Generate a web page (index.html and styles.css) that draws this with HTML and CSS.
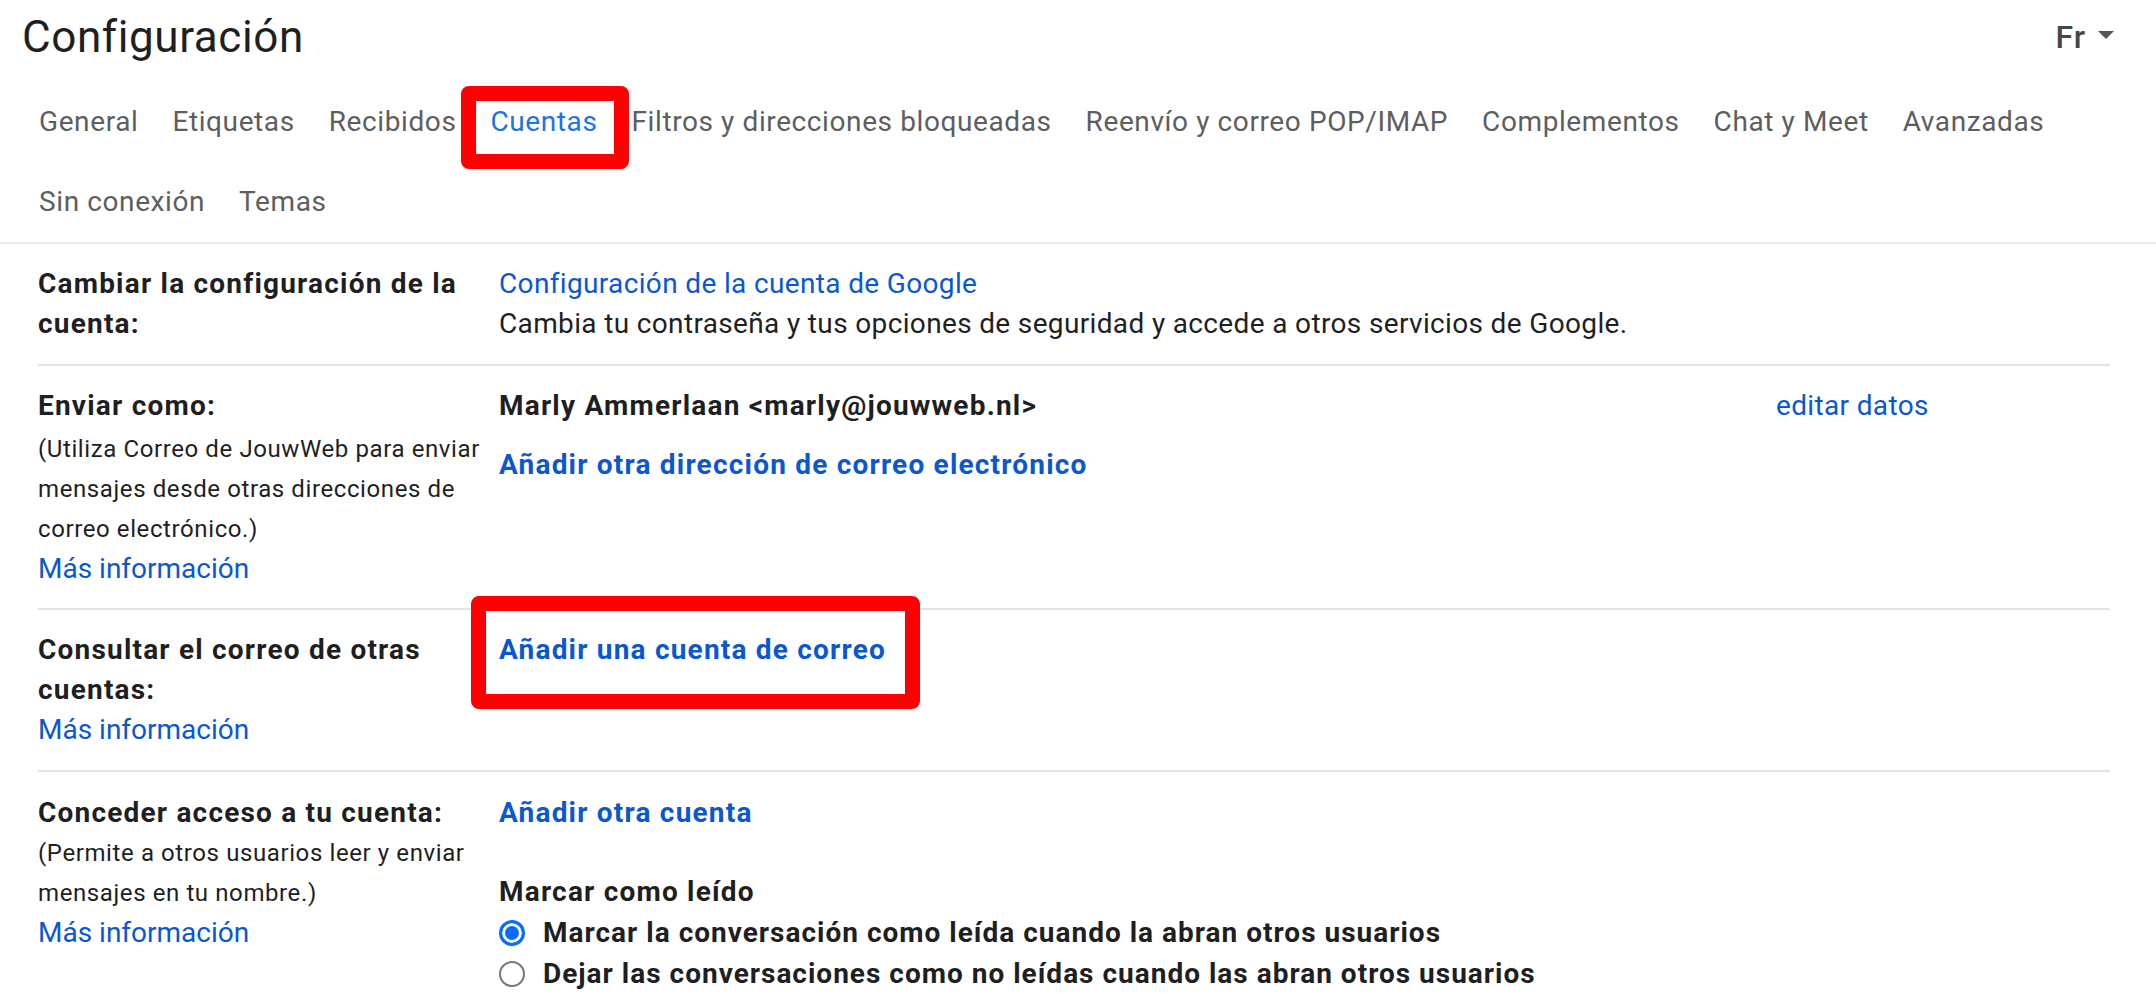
FILE: index.html
```html
<!DOCTYPE html>
<html lang="es">
<head>
    <meta charset="UTF-8">
    <meta name="viewport" content="width=device-width, initial-scale=1.0">
    <title>Configuración - Cuentas</title>
    <link rel="stylesheet" href="styles.css">
</head>
<body>
    <header class="top">
        <div class="title-bar">
            <h1 class="title">Configuración</h1>
            <div class="account">
                <span class="account-name">Fr</span>
                <span class="caret"></span>
            </div>
        </div>
        <nav class="tabs">
            <a href="#" class="tab">General</a>
            <a href="#" class="tab">Etiquetas</a>
            <a href="#" class="tab">Recibidos</a>
            <a href="#" class="tab active">Cuentas<span class="mark mark-tab"></span></a>
            <a href="#" class="tab">Filtros y direcciones bloqueadas</a>
            <a href="#" class="tab">Reenvío y correo POP/IMAP</a>
            <a href="#" class="tab">Complementos</a>
            <a href="#" class="tab">Chat y Meet</a>
            <a href="#" class="tab">Avanzadas</a>
            <a href="#" class="tab">Sin conexión</a>
            <a href="#" class="tab">Temas</a>
        </nav>
    </header>

    <main class="settings">
        <section class="row">
            <div class="label">
                <div class="label-title">Cambiar la configuración de la cuenta:</div>
            </div>
            <div class="value">
                <a href="#" class="link">Configuración de la cuenta de Google</a>
                <div class="text">Cambia tu contraseña y tus opciones de seguridad y accede a otros servicios de Google.</div>
            </div>
        </section>

        <section class="row row-send">
            <div class="label">
                <div class="label-title">Enviar como:</div>
                <div class="label-note">(Utiliza Correo de JouwWeb para enviar mensajes desde otras direcciones de correo electrónico.)</div>
                <a href="#" class="link">Más información</a>
            </div>
            <div class="value">
                <div class="send-as">
                    <div class="strong">Marly Ammerlaan &lt;marly@jouwweb.nl&gt;</div>
                    <a href="#" class="link">editar datos</a>
                </div>
                <a href="#" class="link strong add-address">Añadir otra dirección de correo electrónico</a>
            </div>
        </section>

        <section class="row">
            <div class="label">
                <div class="label-title">Consultar el correo de otras cuentas:</div>
                <a href="#" class="link">Más información</a>
            </div>
            <div class="value">
                <a href="#" class="link strong boxed">Añadir una cuenta de correo<span class="mark mark-link"></span></a>
            </div>
        </section>

        <section class="row row-last">
            <div class="label">
                <div class="label-title">Conceder acceso a tu cuenta:</div>
                <div class="label-note">(Permite a otros usuarios leer y enviar mensajes en tu nombre.)</div>
                <a href="#" class="link">Más información</a>
            </div>
            <div class="value">
                <a href="#" class="link strong">Añadir otra cuenta</a>
                <div class="strong read-title">Marcar como leído</div>
                <label class="option">
                    <span class="radio checked"></span>
                    <span class="strong">Marcar la conversación como leída cuando la abran otros usuarios</span>
                </label>
                <label class="option">
                    <span class="radio"></span>
                    <span class="strong">Dejar las conversaciones como no leídas cuando las abran otros usuarios</span>
                </label>
            </div>
        </section>
    </main>
</body>
</html>
```

FILE: styles.css
```css
* {
    margin: 0;
    padding: 0;
    box-sizing: border-box;
}

body {
    background: #ffffff;
    font-family: Roboto, 'Liberation Sans', sans-serif;
    font-size: 28px;
    line-height: 40px;
    color: #1f1f1f;
    overflow: hidden;
}

a {
    text-decoration: none;
}

/* header */

.top {
    border-bottom: 2px solid #e9edf2;
}

.title-bar {
    display: flex;
    justify-content: space-between;
    align-items: center;
    padding: 0 42px 0 22px;
}

.title {
    font-size: 44px;
    font-weight: 400;
    line-height: 74px;
    letter-spacing: 0.6px;
    color: #1f1f1f;
}

.account {
    display: flex;
    align-items: center;
    gap: 12px;
    color: #474747;
}

.account-name {
    font-size: 32px;
    font-weight: 500;
    line-height: 40px;
    letter-spacing: 1px;
}

.caret {
    width: 0;
    height: 0;
    border-left: 8px solid transparent;
    border-right: 8px solid transparent;
    border-top: 8px solid #555555;
    margin-top: -4px;
}

.tabs {
    display: flex;
    flex-wrap: wrap;
    margin-top: 8px;
    padding: 0 22px;
}

.tab {
    position: relative;
    padding: 0 17px;
    line-height: 80px;
    letter-spacing: 0.6px;
    color: #5e5e5e;
    white-space: nowrap;
}

.tab.active {
    color: #1a73e8;
}

/* red annotation frames */

.mark {
    position: absolute;
    border: 15px solid #ff0000;
    border-radius: 8px;
    pointer-events: none;
    z-index: 5;
}

.mark-tab {
    left: -12px;
    right: -15px;
    top: 4px;
    bottom: -7px;
}

.mark-link {
    left: -28px;
    right: -34px;
    top: -34px;
    bottom: -39px;
}

/* settings rows */

.settings {
    margin: 0 46px 0 38px;
}

.row {
    display: grid;
    grid-template-columns: 461px 1fr;
    padding: 20px 0;
    border-bottom: 2px solid #e3e3e3;
}

.row-send {
    padding-bottom: 19px;
}

.row-send .label-note {
    margin-top: 3px;
}

.row-last {
    border-bottom: none;
    padding-top: 21px;
}

.label {
    width: 452px;
}

.label-title,
.strong {
    font-weight: 700;
    letter-spacing: 1.2px;
}

.label-note {
    font-size: 24px;
    line-height: 40px;
    letter-spacing: 0.6px;
}

.label .link {
    display: block;
}

.value {
    display: flex;
    flex-direction: column;
    align-items: flex-start;
    letter-spacing: 0.35px;
}

.link {
    color: #0b57d0;
}

.text {
    color: #1f1f1f;
}

.send-as {
    display: grid;
    grid-template-columns: 1277px auto;
    width: 100%;
}

.add-address {
    margin-top: 19px;
}

.boxed {
    position: relative;
    display: inline-block;
}

.read-title {
    margin-top: 39px;
}

.option {
    display: flex;
    align-items: center;
    gap: 18px;
    margin-top: 1px;
    cursor: pointer;
}

.option .strong {
    letter-spacing: 1px;
}

.radio {
    width: 26px;
    height: 26px;
    border: 2px solid #767676;
    border-radius: 50%;
    background: #ffffff;
}

.radio.checked {
    border: 3px solid #0a6cff;
    background: #0a6cff;
    box-shadow: inset 0 0 0 3px #ffffff;
}
```
